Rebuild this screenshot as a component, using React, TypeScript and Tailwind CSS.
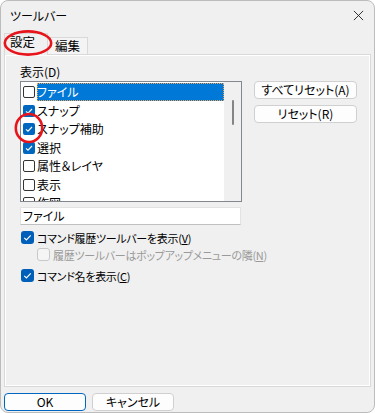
import { type ReactNode } from "react";

const font = { fontFamily: '"Noto Sans CJK JP", "Noto Sans", sans-serif' };

const items = [
  { label: "ファイル", checked: false, selected: true },
  { label: "スナップ", checked: true },
  { label: "スナップ補助", checked: true },
  { label: "選択", checked: true },
  { label: "属性＆レイヤ", checked: false },
  { label: "表示", checked: false },
  { label: "作図", checked: false },
];

function Tick({ className = "" }: { className?: string }) {
  return (
    <svg viewBox="0 0 12 12" className={className}>
      <polyline points="3,6.3 5,8.2 9,4" fill="none" stroke="white" strokeWidth="1.1" />
    </svg>
  );
}

function ListBox({ checked }: { checked: boolean }) {
  return checked ? (
    <span className="flex h-[12px] w-[12px] shrink-0 items-center justify-center rounded-[2px] bg-[#0067c0]">
      <Tick className="h-[12px] w-[12px]" />
    </span>
  ) : (
    <span className="h-[12px] w-[12px] shrink-0 rounded-[2px] border border-[#333] bg-white" />
  );
}

function Check({
  checked,
  disabled,
  children,
}: {
  checked: boolean;
  disabled?: boolean;
  children: ReactNode;
}) {
  return (
    <div className="flex h-[17px] items-center">
      {checked ? (
        <span className="flex h-[13px] w-[13px] items-center justify-center rounded-[3px] bg-[#005fb8]">
          <Tick className="h-[13px] w-[13px]" />
        </span>
      ) : (
        <span
          className={`h-[13px] w-[13px] rounded-[3px] border ${
            disabled ? "border-[#c8c8c8] bg-[#f5f5f5]" : "border-[#666] bg-white"
          }`}
        />
      )}
      <span
        className={`ml-[3px] text-[11px] tracking-[-0.3px] ${disabled ? "text-[#9a9a9a]" : "text-black"}`}
      >
        {children}
      </span>
    </div>
  );
}

function Button({ children, primary }: { children: ReactNode; primary?: boolean }) {
  return (
    <div
      className={`flex h-[18px] items-center justify-center rounded-[4px] bg-[#fdfdfd] ${
        primary ? "border border-[#0067c0]" : "border border-[#d0d0d0]"
      }`}
    >
      {children}
    </div>
  );
}

export default function App() {
  return (
    <div
      className="relative flex h-[413px] w-[375px] flex-col overflow-hidden rounded-[8px] border border-[#bcbcbc] bg-[#f0f0f0] text-[12px] leading-[16px] text-black [font-feature-settings:'palt']"
      style={font}
    >
      {/* title bar */}
      <div className="flex h-[29px] shrink-0 items-center justify-between pl-[9px] pr-[8px]">
        <span>ツールバー</span>
        <svg viewBox="0 0 12 12" className="mr-[2px] h-[11px] w-[11px]">
          <path d="M1 1 L11 11 M11 1 L1 11" stroke="#222" strokeWidth="1" fill="none" />
        </svg>
      </div>

      {/* tabs */}
      <div className="relative flex h-[24px] shrink-0 items-end pl-[3px]">
        <div className="z-10 -mb-px flex h-[22px] w-[44px] items-start border border-b-0 border-[#d9d9d9] bg-[#f0f0f0] pl-[5px] text-[12.5px]">
          設定
        </div>
        <div className="flex h-[17px] w-[40px] items-center justify-center border border-b-0 border-l-0 border-[#d9d9d9] bg-[#f4f4f4] text-[12.5px]">
          編集
        </div>
        <svg className="pointer-events-none absolute left-[2px] top-0 z-20 h-[26px] w-[50px]" viewBox="0 0 50 26">
          <ellipse cx="25" cy="13" rx="23.2" ry="11.6" fill="none" stroke="#e8141b" strokeWidth="2.6" />
        </svg>
      </div>

      {/* panel */}
      <div className="mx-[3px] h-[333px] shrink-0 border border-[#d9d9d9]">
        <div className="h-full border border-white pl-[14px] pt-[8px]">
          <div>表示(D)</div>
          <div className="mt-[1px] flex">
            <div className="relative flex h-[121px] w-[222px] border border-[#828790] bg-white">
              <div className="flex-1 overflow-hidden pt-[1px]">
                {items.map((it) => (
                  <div key={it.label} className="flex h-[18.5px] items-center pl-[2px]">
                    <ListBox checked={it.checked} />
                    <span
                      className={`ml-[2px] flex h-[18px] flex-1 items-center ${
                        it.selected
                          ? "bg-[#0078d7] text-white outline-1 -outline-offset-1 outline-dotted outline-[#f5a34a]"
                          : ""
                      }`}
                    >
                      {it.label}
                    </span>
                  </div>
                ))}
              </div>
              <div className="flex w-[17px] shrink-0 justify-center bg-[#f0f0f0] pt-[18px]">
                <div className="h-[25px] w-[2px] rounded-full bg-[#858585]" />
              </div>
            </div>
            <div className="ml-[12px] flex w-[103px] flex-col gap-[6px]">
              <Button>すべてリセット(A)</Button>
              <Button>リセット(R)</Button>
            </div>
          </div>
          <div className="mt-[5px] flex h-[18px] w-[221px] items-center border border-[#e3e3e3] border-b-[#c0c0c0] bg-white pl-[2px]">
            ファイル
          </div>
          <div className="mt-[4px] pl-[1px]">
            <Check checked>
              コマンド履歴ツールバーを表示(<span className="underline">V</span>)
            </Check>
            <div className="pl-[16px]">
              <Check checked={false} disabled>
                履歴ツールバーはポップアップメニューの隣(<span className="underline">N</span>)
              </Check>
            </div>
            <div className="mt-[4px]">
              <Check checked>
                コマンド名を表示(<span className="underline">C</span>)
              </Check>
            </div>
          </div>
        </div>
      </div>

      {/* footer */}
      <div className="flex gap-[6px] pl-[3px] pt-[6px]">
        <div className="w-[82px]">
          <Button primary>OK</Button>
        </div>
        <div className="w-[82px]">
          <Button>キャンセル</Button>
        </div>
      </div>

      {/* annotation circle */}
      <svg className="pointer-events-none absolute left-[13px] top-[111px] h-[32px] w-[30px]" viewBox="0 0 30 32">
        <ellipse cx="15" cy="16" rx="13.2" ry="14" fill="none" stroke="#e8141b" strokeWidth="2.6" />
      </svg>
    </div>
  );
}
